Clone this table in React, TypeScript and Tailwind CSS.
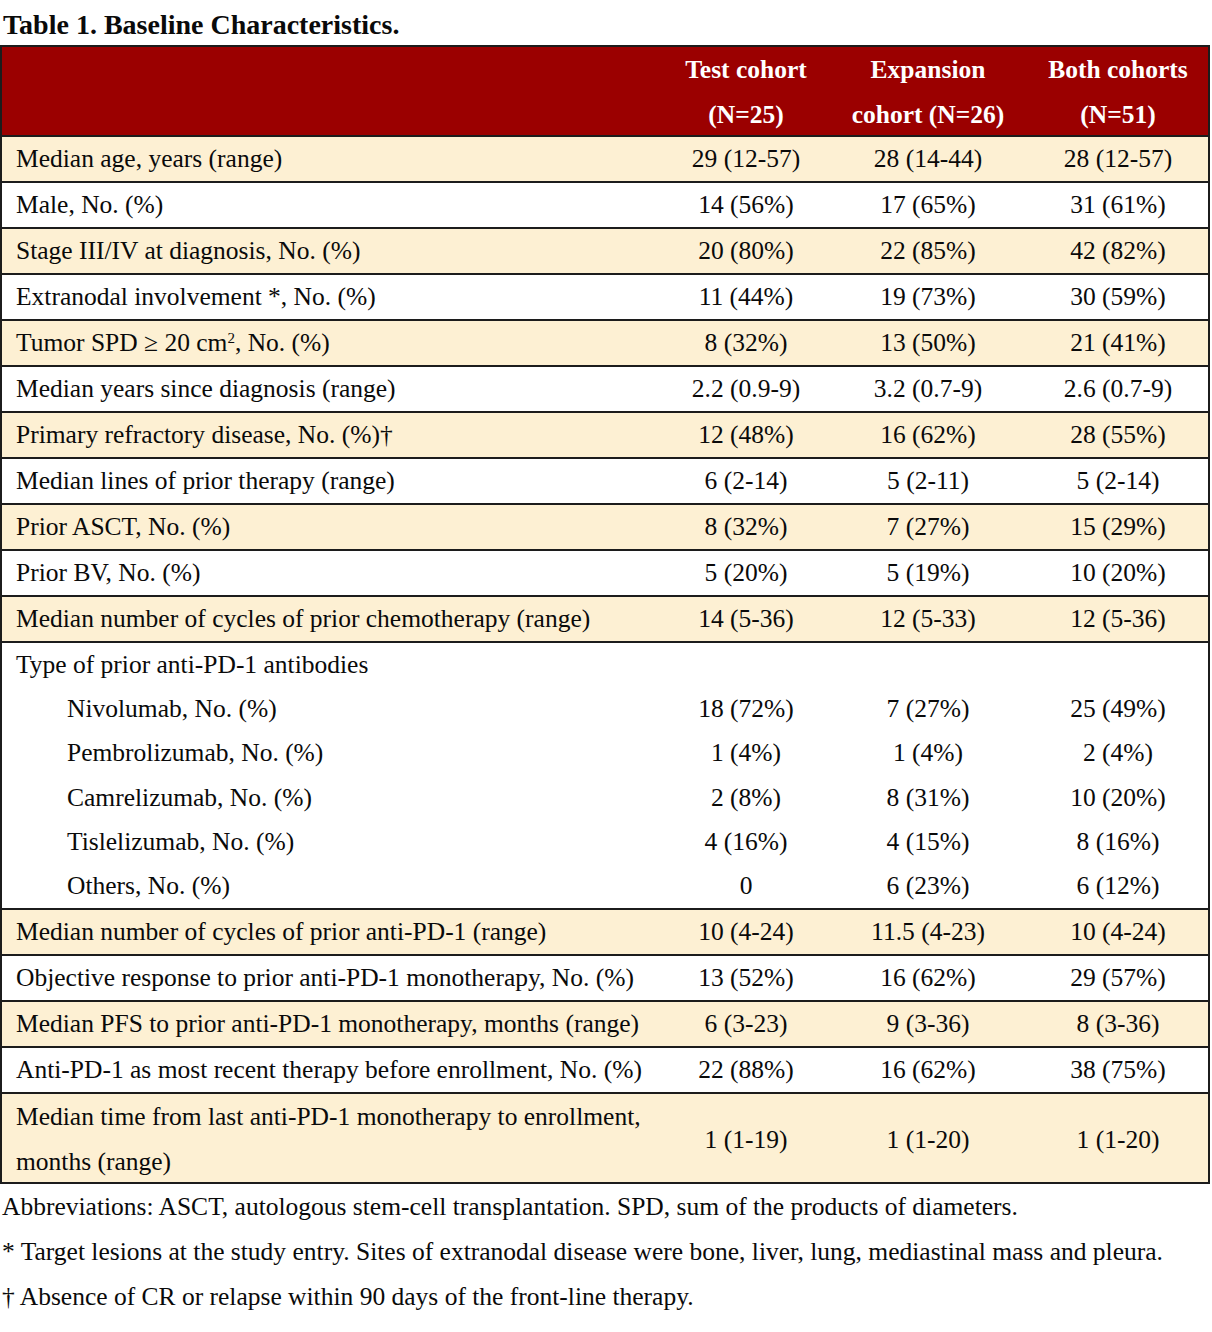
import React from "react";

type Row = { label: React.ReactNode; v: [string, string, string]; shade: boolean };

const rows1: Row[] = [
  { label: "Median age, years (range)", v: ["29 (12-57)", "28 (14-44)", "28 (12-57)"], shade: true },
  { label: "Male, No. (%)", v: ["14 (56%)", "17 (65%)", "31 (61%)"], shade: false },
  { label: "Stage III/IV at diagnosis, No. (%)", v: ["20 (80%)", "22 (85%)", "42 (82%)"], shade: true },
  { label: "Extranodal involvement *, No. (%)", v: ["11 (44%)", "19 (73%)", "30 (59%)"], shade: false },
  {
    label: (
      <>
        Tumor SPD ≥ 20 cm<sup className="text-[15px]">2</sup>, No. (%)
      </>
    ),
    v: ["8 (32%)", "13 (50%)", "21 (41%)"],
    shade: true,
  },
  { label: "Median years since diagnosis (range)", v: ["2.2 (0.9-9)", "3.2 (0.7-9)", "2.6 (0.7-9)"], shade: false },
  { label: "Primary refractory disease, No. (%)†", v: ["12 (48%)", "16 (62%)", "28 (55%)"], shade: true },
  { label: "Median lines of prior therapy (range)", v: ["6 (2-14)", "5 (2-11)", "5 (2-14)"], shade: false },
  { label: "Prior ASCT, No. (%)", v: ["8 (32%)", "7 (27%)", "15 (29%)"], shade: true },
  { label: "Prior BV, No. (%)", v: ["5 (20%)", "5 (19%)", "10 (20%)"], shade: false },
  { label: "Median number of cycles of prior chemotherapy (range)", v: ["14 (5-36)", "12 (5-33)", "12 (5-36)"], shade: true },
];

const group: { label: string; v: [string, string, string] }[] = [
  { label: "Nivolumab, No. (%)", v: ["18 (72%)", "7 (27%)", "25 (49%)"] },
  { label: "Pembrolizumab, No. (%)", v: ["1 (4%)", "1 (4%)", "2 (4%)"] },
  { label: "Camrelizumab, No. (%)", v: ["2 (8%)", "8 (31%)", "10 (20%)"] },
  { label: "Tislelizumab, No. (%)", v: ["4 (16%)", "4 (15%)", "8 (16%)"] },
  { label: "Others, No. (%)", v: ["0", "6 (23%)", "6 (12%)"] },
];

const rows2: Row[] = [
  { label: "Median number of cycles of prior anti-PD-1 (range)", v: ["10 (4-24)", "11.5 (4-23)", "10 (4-24)"], shade: true },
  { label: "Objective response to prior anti-PD-1 monotherapy, No. (%)", v: ["13 (52%)", "16 (62%)", "29 (57%)"], shade: false },
  { label: "Median PFS to prior anti-PD-1 monotherapy, months (range)", v: ["6 (3-23)", "9 (3-36)", "8 (3-36)"], shade: true },
  { label: "Anti-PD-1 as most recent therapy before enrollment, No. (%)", v: ["22 (88%)", "16 (62%)", "38 (75%)"], shade: false },
];

const grid = "grid grid-cols-[654px_180px_184px_1fr]";

function DataRow({ r }: { r: Row }) {
  return (
    <div className={`${grid} h-[46px] items-center border-b-2 border-[#1c1c1c] ${r.shade ? "bg-[#fdf0d3]" : "bg-white"}`}>
      <div className="pl-[14px] whitespace-nowrap">{r.label}</div>
      <div className="text-center">{r.v[0]}</div>
      <div className="text-center">{r.v[1]}</div>
      <div className="text-center pl-[8px]">{r.v[2]}</div>
    </div>
  );
}

export default function App() {
  return (
    <div className="w-[1212px] bg-white text-[#0a0a0a] text-[25.5px]" style={{ fontFamily: '"Liberation Serif", "Times New Roman", serif' }}>
      <div className="h-[45px] leading-[45px] font-bold pl-[3px] pt-[2px] text-[28px]">Table 1. Baseline Characteristics.</div>
      <div className="w-[1210px] border-l-2 border-r-2 border-t-2 border-[#1c1c1c]">
        <div className={`${grid} h-[90px] items-center border-b-2 border-[#1c1c1c] bg-[#9b0000] text-white font-bold leading-[45px]`}>
          <div />
          <div className="text-center">
            Test cohort
            <br />
            (N=25)
          </div>
          <div className="text-center">
            Expansion
            <br />
            cohort (N=26)
          </div>
          <div className="text-center pl-[8px]">
            Both cohorts
            <br />
            (N=51)
          </div>
        </div>
        {rows1.map((r, i) => (
          <DataRow key={i} r={r} />
        ))}
        <div className="border-b-2 border-[#1c1c1c] bg-white leading-[44.2px]">
          <div className={grid}>
            <div className="pl-[14px]">Type of prior anti-PD-1 antibodies</div>
            <div />
            <div />
            <div />
          </div>
          {group.map((g, i) => (
            <div key={i} className={grid}>
              <div className="pl-[65px]">{g.label}</div>
              <div className="text-center">{g.v[0]}</div>
              <div className="text-center">{g.v[1]}</div>
              <div className="text-center pl-[8px]">{g.v[2]}</div>
            </div>
          ))}
        </div>
        {rows2.map((r, i) => (
          <DataRow key={i} r={r} />
        ))}
        <div className={`${grid} h-[90px] items-center border-b-2 border-[#1c1c1c] bg-[#fdf0d3] leading-[45px]`}>
          <div className="pl-[14px] whitespace-nowrap">
            Median time from last anti-PD-1 monotherapy to enrollment,
            <br />
            months (range)
          </div>
          <div className="text-center">1 (1-19)</div>
          <div className="text-center">1 (1-20)</div>
          <div className="text-center pl-[8px]">1 (1-20)</div>
        </div>
      </div>
      <div className="leading-[45px] pl-[2px]">
        <div>Abbreviations: ASCT, autologous stem-cell transplantation. SPD, sum of the products of diameters.</div>
        <div>* Target lesions at the study entry. Sites of extranodal disease were bone, liver, lung, mediastinal mass and pleura.</div>
        <div>† Absence of CR or relapse within 90 days of the front-line therapy.</div>
      </div>
      <div className="h-[14px]" />
    </div>
  );
}
